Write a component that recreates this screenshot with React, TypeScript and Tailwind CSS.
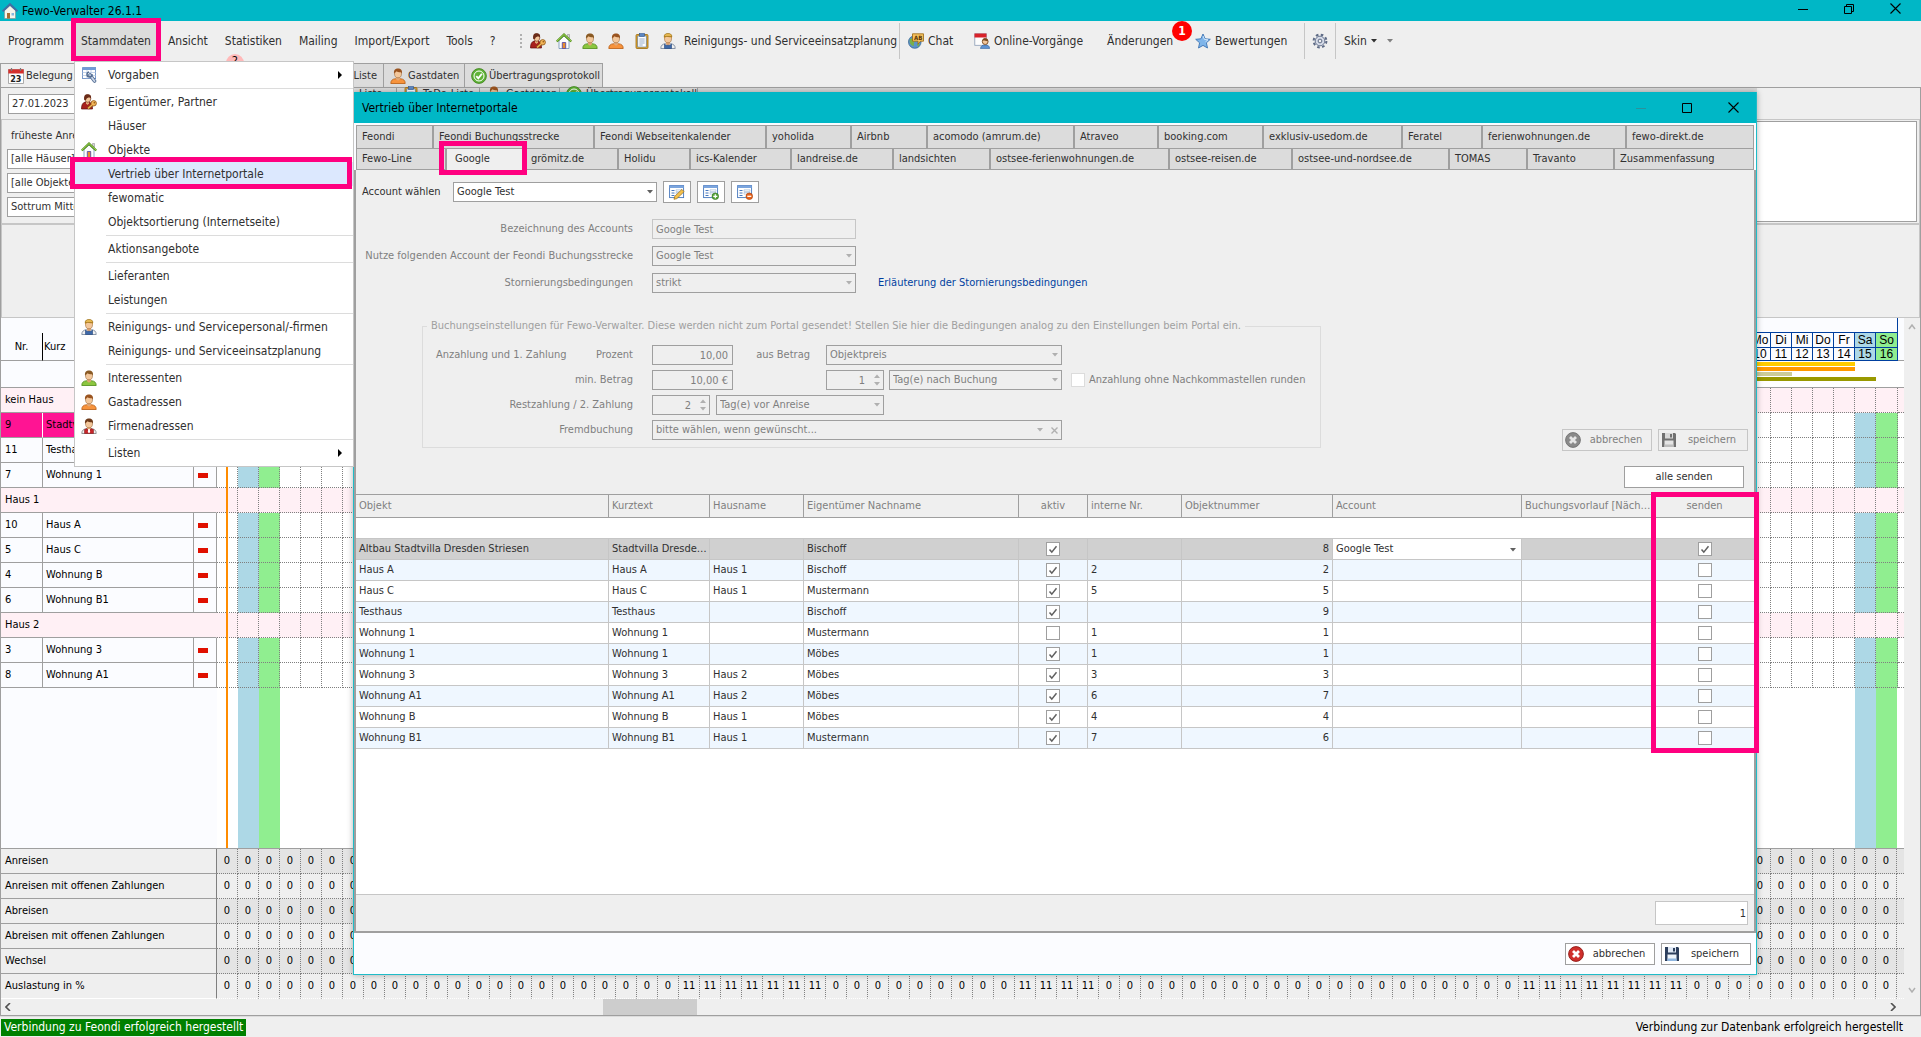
import { ReactNode, useState } from "react";
import clsx from "clsx";

interface IconProps {
  className?: string;
}

interface PersonProps {
  hair: string;
  shirt: string;
  edge: string;
  children?: ReactNode;
}

interface ObjectRow {
  name: string;
  short: string;
  house: string;
  owner: string;
  active: boolean;
  internal: string;
  number: number;
  account?: string;
  send?: boolean;
}

const DAY_NAMES = ["Fr", "Sa", "So", "Mo", "Di", "Mi", "Do"];

// 80 days starting on Friday, 27.01.2023
const days = Array.from({ length: 80 }, (_, i) => {
  const date = new Date(2023, 0, 27 + i);
  return { index: i, name: DAY_NAMES[i % 7], day: date.getDate() };
});

const calendarRows = [
  { nr: "", label: "kein Haus", house: true },
  { nr: "9", label: "Stadtvilla Dresden", selected: true },
  { nr: "11", label: "Testhaus" },
  { nr: "7", label: "Wohnung 1" },
  { nr: "", label: "Haus 1", house: true },
  { nr: "10", label: "Haus A" },
  { nr: "5", label: "Haus C" },
  { nr: "4", label: "Wohnung B" },
  { nr: "6", label: "Wohnung B1" },
  { nr: "", label: "Haus 2", house: true },
  { nr: "3", label: "Wohnung 3" },
  { nr: "8", label: "Wohnung A1" },
];

const summaryRows = [
  "Anreisen",
  "Anreisen mit offenen Zahlungen",
  "Abreisen",
  "Abreisen mit offenen Zahlungen",
  "Wechsel",
  "Auslastung in %",
];

const objectRows: ObjectRow[] = [
  { name: "Altbau Stadtvilla Dresden Striesen", short: "Stadtvilla Dresden Striesen", house: "", owner: "Bischoff", active: true, internal: "", number: 8, account: "Google Test", send: true },
  { name: "Haus A", short: "Haus A", house: "Haus 1", owner: "Bischoff", active: true, internal: "2", number: 2 },
  { name: "Haus C", short: "Haus C", house: "Haus 1", owner: "Mustermann", active: true, internal: "5", number: 5 },
  { name: "Testhaus", short: "Testhaus", house: "", owner: "Bischoff", active: true, internal: "", number: 9 },
  { name: "Wohnung 1", short: "Wohnung 1", house: "", owner: "Mustermann", active: false, internal: "1", number: 1 },
  { name: "Wohnung 1", short: "Wohnung 1", house: "", owner: "Möbes", active: true, internal: "1", number: 1 },
  { name: "Wohnung 3", short: "Wohnung 3", house: "Haus 2", owner: "Möbes", active: true, internal: "3", number: 3 },
  { name: "Wohnung A1", short: "Wohnung A1", house: "Haus 2", owner: "Möbes", active: true, internal: "6", number: 7 },
  { name: "Wohnung B", short: "Wohnung B", house: "Haus 1", owner: "Möbes", active: true, internal: "4", number: 4 },
  { name: "Wohnung B1", short: "Wohnung B1", house: "Haus 1", owner: "Mustermann", active: true, internal: "7", number: 6 },
];

const portalTabsTop = [
  ["Feondi", "w-[77px]"],
  ["Feondi Buchungsstrecke", "w-[161px]"],
  ["Feondi Webseitenkalender", "w-[172px]"],
  ["yoholida", "w-[85px]"],
  ["Airbnb", "w-[76px]"],
  ["acomodo (amrum.de)", "w-[147px]"],
  ["Atraveo", "w-[84px]"],
  ["booking.com", "w-[105px]"],
  ["exklusiv-usedom.de", "w-[139px]"],
  ["Feratel", "w-[80px]"],
  ["ferienwohnungen.de", "w-[144px]"],
  ["fewo-direkt.de", "w-[127px]"],
];

const portalTabsBottom = [
  ["Fewo-Line", "w-[90px]"],
  ["Google", "w-[79px]"],
  ["grömitz.de", "w-[93px]"],
  ["Holidu", "w-[72px]"],
  ["ics-Kalender", "w-[101px]"],
  ["landreise.de", "w-[102px]"],
  ["landsichten", "w-[97px]"],
  ["ostsee-ferienwohnungen.de", "w-[179px]"],
  ["ostsee-reisen.de", "w-[123px]"],
  ["ostsee-und-nordsee.de", "w-[157px]"],
  ["TOMAS", "w-[78px]"],
  ["Travanto", "w-[87px]"],
  ["Zusammenfassung", "w-[139px]"],
];

/* ---------- Icons ---------- */

function Person({ hair, shirt, edge, children }: PersonProps) {
  return (
    <svg viewBox="0 0 16 16" className="size-4 shrink-0">
      <path d="M.8 15.500c0-3 1.500-4.500 5-4.800h4.400c3.500.3 5 1.800 5 4.800z" fill={shirt} stroke={edge} strokeWidth=".8" />
      <path d="M6 8.500h4v2.700l-2 1.500-2-1.500z" fill="#e2a877" />
      <ellipse cx="8" cy="5.600" rx="3.500" ry="4.200" fill="#f3c79b" stroke="#9a6a3a" strokeWidth=".6" />
      <path d="M4.100 5.800C3.400 2.200 5.300.4 8 .4s4.600 1.700 3.900 5.400L11 4.200C9.500 4.400 7.500 4 6.600 3.200 6 4 5.200 4.400 5 4.500z" fill={hair} />
      {children}
    </svg>
  );
}

const GreenPerson = () => <Person hair="#8a5a24" shirt="#8cc63f" edge="#4d8a17" />;
const OrangePerson = () => <Person hair="#9a5420" shirt="#f7933c" edge="#b85c10" />;

const OwnerIcon = () => (
  <svg viewBox="0 0 16 16" className="size-4 shrink-0">
    <path d="M.5 15c0-4 1-6.500 4-7h3.500c2.500.5 3.500 3 3.500 7z" fill="#a8201e" stroke="#5f0d0d" strokeWidth=".7" />
    <path d="M5 7h3v2.500L6.500 11 5 9.500z" fill="#e2a877" />
    <ellipse cx="6.800" cy="4.600" rx="3" ry="3.700" fill="#f3c79b" stroke="#6b2c18" strokeWidth=".6" />
    <path d="M3.300 6C2.600 2 4 .3 6.500.3S10.600 1.500 10 4.500L8 3.300C7 4 5.500 4 5 6z" fill="#6b2c18" />
    <path d="M11.500 10.500 7 14.500" stroke="#8a5313" strokeWidth="2.800" />
    <circle cx="12.700" cy="9.300" r="2.700" fill="#f3b65a" stroke="#8a5313" strokeWidth=".8" />
    <path d="M11.500 10.500 7 14.500" stroke="#f3b65a" strokeWidth="1.400" />
    <circle cx="13.300" cy="8.700" r=".8" fill="#8a5313" />
  </svg>
);

const WorkerIcon = () => (
  <Person hair="#c98f35" shirt="#f0f0f0" edge="#6f7f95">
    <path d="M4.500 11v4.500h7V11l-1.500 1.300H6z" fill="#3d68a8" stroke="#24457a" strokeWidth=".6" />
    <path d="M4 3.500C4.500 1 6 .4 8 .4s3.500.6 4 3.100z" fill="#e5b64f" stroke="#8a6410" strokeWidth=".5" />
  </Person>
);

const CompanyIcon = () => (
  <Person hair="#6d3a1a" shirt="#f2f2f2" edge="#7b7b7b">
    <path d="M3.500 11.500 6 10.600l2 3 2-3 2.500.9v4h-9z" fill="#c6262a" stroke="#7d1012" strokeWidth=".5" />
    <path d="M7.300 11h1.400l.5 3L8 15.300 6.800 14z" fill="#fff" />
  </Person>
);

const HouseIcon = () => (
  <svg viewBox="0 0 16 16" className="size-4 shrink-0">
    <path d="M3 7.500 8 3l5 4.500v8H3z" fill="#fdfdfd" stroke="#6d8fb5" strokeWidth=".8" />
    <path d="M11.500 1.500h2v3.800l-2-1.800z" fill="#d8d8d8" stroke="#808080" strokeWidth=".5" />
    <path d="M.8 8.500 8 1.600l7.200 6.900" fill="none" stroke="#4d8a17" strokeWidth="2.200" />
    <path d="M.8 8.300 8 1.500l7.200 6.800" fill="none" stroke="#a6d95b" strokeWidth="1" />
    <path d="M6.300 15.500V9.500h3.400v6z" fill="#e88c2e" stroke="#5a4fa8" strokeWidth=".9" />
  </svg>
);

const AppIcon = () => (
  <svg viewBox="0 0 16 16" className="size-4 shrink-0">
    <path d="M2.500 7.500 8 2.500l5.500 5v8h-11z" fill="#f7f4ea" stroke="#8a8a8a" strokeWidth=".6" />
    <path d="M.6 8.400 8 1.200l7.400 7.200" fill="none" stroke="#3f6fa3" strokeWidth="2" />
    <path d="M5 15.500V10h3v5.500z" fill="#a86c32" />
    <path d="M9.500 10h2.500v2.500H9.500z" fill="#88b8dd" />
  </svg>
);

const ClipboardIcon = () => (
  <svg viewBox="0 0 16 16" className="size-4 shrink-0">
    <rect x="2" y="1.500" width="12" height="14" rx="1" fill="#e5a82e" stroke="#9a6a10" strokeWidth=".8" />
    <rect x="3.800" y="3" width="8.400" height="11" fill="#fff" stroke="#4a74b0" strokeWidth=".6" />
    <rect x="5.500" y=".6" width="5" height="2.800" fill="#5c87c2" stroke="#2f5690" strokeWidth=".6" />
    <path d="M5.300 6h5.400M5.300 8h5.400M5.300 10h5.400M5.300 12h3.400" stroke="#7a96bd" strokeWidth=".8" />
  </svg>
);

const ChatIcon = () => (
  <svg viewBox="0 0 16 16" className="size-4 shrink-0">
    <circle cx="6.800" cy="9" r="6.300" fill="#5b93c9" stroke="#2c5d8c" strokeWidth=".7" />
    <path d="M2 6c2-1 3 0 4 2s-1 3 0 5c-3 0-5-3-4-7zM9 11l3 0-2 3z" fill="#79b04a" />
    <path d="M4.500.8h11v7.400h-3l-2.500 3V8.200H4.500z" fill="#f6c35f" stroke="#99640f" strokeWidth=".8" />
    <text x="6" y="6.700" fontSize="6" fontWeight="bold" fill="#5c3605">AB</text>
  </svg>
);

const OnlineIcon = () => (
  <svg viewBox="0 0 16 16" className="size-4 shrink-0">
    <rect x=".8" y=".8" width="11.500" height="11.500" fill="#fdfdfd" stroke="#8a9cb5" strokeWidth=".8" />
    <path d="M.5.500h12v4H.5z" fill="#d8232a" />
    <path d="M6.500 15.600c.3-3 2-3.600 4.700-3.600s4.200.6 4.400 3.600z" fill="#5f92d1" stroke="#2e5c98" strokeWidth=".6" />
    <circle cx="11.200" cy="8.600" r="2.900" fill="#f3c79b" stroke="#7a4a20" strokeWidth=".9" />
    <path d="M8.300 8.200c.2-2.500 1.500-3 2.900-3s2.700.6 2.900 3c-1.500.2-4-1-4.300-1z" fill="#7a4a20" />
  </svg>
);

const StarIcon = () => (
  <svg viewBox="0 0 16 16" className="size-4 shrink-0">
    <path d="m8 1 2.100 4.800 5.200.5-3.900 3.500 1.100 5.200L8 12.400 3.500 15l1.100-5.200L.7 6.300l5.200-.5z" fill="#7fb5ea" stroke="#3d74b3" strokeWidth=".9" strokeLinejoin="round" />
    <path d="m8 3 1.400 3.400 3.600.4-2.500 2" fill="none" stroke="#cfe5fa" strokeWidth="1" />
  </svg>
);

const GearIcon = () => (
  <svg viewBox="0 0 16 16" className="size-4 shrink-0">
    <circle cx="8" cy="8" r="6.400" fill="none" stroke="#5d6a85" strokeWidth="2" strokeDasharray="2.600 2.430" />
    <circle cx="8" cy="8" r="4.800" fill="#d5dbe8" stroke="#6c7892" strokeWidth="1" />
    <circle cx="8" cy="8" r="1.900" fill="#f0f0f0" stroke="#5d6a85" strokeWidth="1" />
  </svg>
);

const CalendarIcon = () => (
  <svg viewBox="0 0 16 16" className="size-4 shrink-0">
    <rect x=".6" y="1.600" width="14.800" height="13.800" fill="#fff" stroke="#9a9a9a" strokeWidth=".8" />
    <path d="M.3 1.300h15.400v4.200H.3z" fill="#d4302c" />
    <path d="M3.500 0v3M12.500 0v3" stroke="#7c7c7c" strokeWidth="1.200" />
    <text x="2.200" y="14.200" fontSize="9" fontWeight="bold" fill="#222">23</text>
  </svg>
);

const ToolsIcon = () => (
  <svg viewBox="0 0 16 16" className="size-4 shrink-0">
    <rect x="1.600" y=".6" width="13" height="11" fill="#fff" stroke="#5b83bf" strokeWidth=".8" />
    <path d="M1.600.6h13V3h-13z" fill="#6f9ad6" />
    <path d="M1.600 5.500h13M1.600 8.500h13M6 3v8.500M10 3v8.500" stroke="#b5c9e6" strokeWidth=".8" />
    <path d="m9 8 4.500 6" stroke="#566f94" strokeWidth="3.600" strokeLinecap="round" />
    <path d="m9 8 4.500 6" stroke="#c8d5e8" strokeWidth="1.800" strokeLinecap="round" />
    <circle cx="8.500" cy="7.500" r="2.500" fill="none" stroke="#566f94" strokeWidth="1.500" strokeDasharray="11 4" />
  </svg>
);

const CheckIcon = () => (
  <svg viewBox="0 0 16 16" className="size-4 shrink-0">
    <circle cx="8" cy="8" r="7.400" fill="#5fb336" stroke="#3b7f1b" strokeWidth=".8" />
    <circle cx="8" cy="8" r="5" fill="none" stroke="#fff" strokeWidth="1" />
    <path d="m5.300 8.200 2 2.200 3.600-4.600" fill="none" stroke="#fff" strokeWidth="1.800" />
  </svg>
);

function FormIcon({ kind }: { kind: "edit" | "add" | "remove" }) {
  return (
    <svg viewBox="0 0 16 16" className="size-4">
      <rect x=".6" y="1.600" width="14" height="12" fill="#fff" stroke="#4677bd" strokeWidth=".9" />
      <path d="M.6 1.600h14V4H.6z" fill="#7ba5de" />
      <path d="M2.500 6.500h3M2.500 9h3M2.500 11.500h3" stroke="#4677bd" strokeWidth="1" />
      <path d="M7 5.800h6v1.600H7zM7 8.500h6v1.600H7z" fill="#fff" stroke="#9bb3d4" strokeWidth=".6" />
      {kind === "edit" && <path d="m5 15.300.7-2.900 7.200-7 2.200 2.200-7.200 7z" fill="#f5c14b" stroke="#9a6a10" strokeWidth=".7" />}
      {kind === "add" && (
        <>
          <circle cx="12.300" cy="12.300" r="3.300" fill="#57a639" stroke="#2f6f1b" strokeWidth=".6" />
          <path d="M10.300 12.300h4M12.300 10.300v4" stroke="#fff" strokeWidth="1.200" />
        </>
      )}
      {kind === "remove" && (
        <>
          <circle cx="12.300" cy="12.300" r="3.300" fill="#e8631c" stroke="#a33c08" strokeWidth=".6" />
          <path d="M10.300 12.300h4" stroke="#fff" strokeWidth="1.300" />
        </>
      )}
    </svg>
  );
}

function CancelIcon({ disabled }: { disabled?: boolean }) {
  return (
    <svg viewBox="0 0 16 16" className="size-4">
      <circle cx="8" cy="8" r="7.400" fill={disabled ? "#8a8a8a" : "#cf2f2b"} stroke={disabled ? "#707070" : "#8e1714"} strokeWidth=".9" />
      <path d="m5 5 6 6M11 5l-6 6" stroke={disabled ? "#e6e6e6" : "#fff"} strokeWidth="2.800" />
    </svg>
  );
}

function SaveIcon({ disabled }: { disabled?: boolean }) {
  return (
    <svg viewBox="0 0 16 16" className="size-4">
      <path d="M1 1h13l1 1v13H1z" fill={disabled ? "#707070" : "#2c3e5c"} />
      <path d="M4 1h8v5.500H4z" fill={disabled ? "#d8d8d8" : "#dfe8f5"} />
      <path d="M9 2h2v3.500H9z" fill={disabled ? "#707070" : "#2c3e5c"} />
      <path d="M3.500 8.500h9V15h-9z" fill={disabled ? "#e4e4e4" : "#eef4fb"} />
      <path d="M3.500 12.500h9V15h-9z" fill={disabled ? "#bdbdbd" : "#8fb6e0"} />
    </svg>
  );
}

function ArrowDown({ className }: IconProps) {
  return (
    <svg viewBox="0 0 6 4" className={clsx("h-1 w-1.5 shrink-0", className)}>
      <path d="M0 0h6L3 3.500z" fill="currentColor" />
    </svg>
  );
}

function WindowButtons({ size, dim, restore }: { size: string; dim?: boolean; restore?: boolean }) {
  return (
    <div className={clsx("flex text-black", size)}>
      <button aria-label="Minimieren" className={clsx("flex w-[46px] items-center justify-center", dim && "text-[#2a929c]")}>
        <svg viewBox="0 0 10 10" className="size-2.5"><path d="M0 5.500h10" stroke="currentColor" /></svg>
      </button>
      <button aria-label="Maximieren" className="flex w-[46px] items-center justify-center">
        <svg viewBox="0 0 10 10" className="size-2.5" fill="none" stroke="currentColor">
          {restore ? <path d="M.5 2.500h7v7h-7zM2.500 2.500v-2h7v7h-2" /> : <path d="M.5.500h9v9h-9z" />}
        </svg>
      </button>
      <button aria-label="Schließen" className="flex w-[46px] items-center justify-center">
        <svg viewBox="0 0 11 11" className="size-[11px]"><path d="m.5.500 10 10M10.500.500l-10 10" stroke="currentColor" strokeWidth="1.100" /></svg>
      </button>
    </div>
  );
}

/* ---------- Form controls ---------- */

interface ComboProps {
  id?: string;
  label?: string;
  value: string;
  width: string;
  disabled?: boolean;
  clearable?: boolean;
}

function Combo({ id, label, value, width, disabled, clearable }: ComboProps) {
  return (
    <div className={clsx("relative h-5 shrink-0", width)}>
      <select
        id={id}
        aria-label={label}
        disabled={disabled}
        className={clsx(
          "h-full w-full appearance-none rounded-none border border-[#9f9f9f] pl-[3px] opacity-100 outline-none",
          disabled ? "bg-[#efefef] text-[#7f7f7f]" : "bg-white text-[#303030]"
        )}
      >
        <option>{value}</option>
      </select>
      <div className={clsx("pointer-events-none absolute inset-y-0 right-1 flex items-center gap-2", disabled ? "text-[#b0b0b0]" : "text-[#606060]")}>
        <ArrowDown />
        {clearable && <svg viewBox="0 0 7 7" className="size-[7px]"><path d="m.5.500 6 6M6.500.500l-6 6" stroke="currentColor" strokeWidth="1.400" /></svg>}
      </div>
    </div>
  );
}

function Spin({ id, label, value }: { id?: string; label?: string; value: string }) {
  return (
    <div className="relative h-5 w-[58px] shrink-0">
      <input id={id} aria-label={label} disabled defaultValue={value} className="h-full w-full border border-[#9f9f9f] bg-[#efefef] pr-[18px] text-right text-[#7f7f7f]" />
      <div className="pointer-events-none absolute inset-y-1 right-1 flex flex-col justify-between text-[#b0b0b0]">
        <ArrowDown className="rotate-180" />
        <ArrowDown />
      </div>
    </div>
  );
}

function Check({ label, checked, light }: { label: string; checked?: boolean; light?: boolean }) {
  const [on, setOn] = useState(Boolean(checked));
  return (
    <span className="relative inline-block size-3.5 align-middle">
      <input
        type="checkbox"
        aria-label={label}
        checked={on}
        onChange={() => setOn(!on)}
        className={clsx("absolute inset-0 size-3.5 appearance-none border bg-white", light ? "border-[#dcdcdc]" : "border-[#9f9f9f]")}
      />
      {on && (
        <svg viewBox="0 0 14 14" className="pointer-events-none absolute inset-0 size-3.5">
          <path d="m3.500 7.500 2.300 2.600 4.700-5.800" fill="none" stroke="#606060" strokeWidth="1.500" />
        </svg>
      )}
    </span>
  );
}

function ActionButton({ icon, children, disabled }: { icon: ReactNode; children: ReactNode; disabled?: boolean }) {
  return (
    <button
      disabled={disabled}
      className={clsx(
        "flex h-[22px] w-[90px] items-center border pl-0.5",
        disabled ? "border-[#c6c6c6] bg-[#efefef] text-[#7f7f7f]" : "border-[#9f9f9f] bg-white text-[#303030]"
      )}
    >
      {icon}
      <span className="flex-1 text-center">{children}</span>
    </button>
  );
}

/* ---------- Main window ---------- */

function MenuBar() {
  const separator = "h-9 w-px shrink-0 bg-[#c6c6c6]";
  return (
    <div className="flex h-10 items-center text-xs text-[#303030]">
      <nav className="flex w-[520px] shrink-0 items-center gap-px">
        {["Programm", "Stammdaten", "Ansicht", "Statistiken", "Mailing", "Import/Export", "Tools", "?"].map((item) => (
          <button key={item} className={clsx("h-9 px-2", item === "Stammdaten" && "bg-[#dcdcdc]")}>
            {item}
          </button>
        ))}
      </nav>
      <div className="flex w-2.5 flex-col gap-0.5">
        {[0, 1, 2, 3].map((i) => <span key={i} className="size-0.5 bg-[#b0b0b0]" />)}
      </div>
      <div className="flex items-center gap-2.5">
        <OwnerIcon />
        <HouseIcon />
        <GreenPerson />
        <OrangePerson />
        <ClipboardIcon />
        <WorkerIcon />
      </div>
      <button className="ml-2 w-[215px] shrink-0 text-left whitespace-nowrap">Reinigungs- und Serviceeinsatzplanung</button>
      <div className={separator} />
      <button className="ml-2 flex w-16 items-center gap-1"><ChatIcon />Chat</button>
      <button className="ml-0.5 flex w-[133px] items-center gap-1 whitespace-nowrap"><OnlineIcon />Online-Vorgänge</button>
      <button className="relative w-[88px] text-left">
        Änderungen
        <span className="absolute -top-3 left-[65px] flex size-5 items-center justify-center rounded-full bg-[#ff0000] font-bold text-white">1</span>
      </button>
      <button className="flex w-[109px] items-center gap-1"><StarIcon />Bewertungen</button>
      <div className={separator} />
      <button aria-label="Einstellungen" className="flex w-[30px] justify-center"><GearIcon /></button>
      <div className={separator} />
      <button className="ml-2 flex items-center gap-1">Skin<ArrowDown /></button>
      <ArrowDown className="ml-2.5 text-[#808080]" />
    </div>
  );
}

function MainTabs() {
  const tab = "flex items-center gap-0.5 border-r border-[#9f9f9f] bg-[#dcdcdc] px-1.5 whitespace-nowrap";
  return (
    <div className="mt-0.5 flex h-[25px] border-b border-[#9f9f9f] text-[#303030]">
      <div className="flex border-t border-l border-[#9f9f9f]">
        <button className="flex w-[116px] items-center gap-0.5 bg-[#efefef] px-[7px]"><CalendarIcon />Belegung</button>
        <button className={clsx(tab, "w-[84px]")}><HouseIcon />Objekte</button>
        <button className={clsx(tab, "w-[84px]")}><ClipboardIcon />Liste</button>
        <button className={clsx(tab, "w-[99px] justify-end")}>ToDo-Liste</button>
        <button className={clsx(tab, "w-[81px]")}><OrangePerson />Gastdaten</button>
        <button className={clsx(tab, "w-[138px]")}><CheckIcon />Übertragungsprotokoll</button>
      </div>
    </div>
  );
}

function FilterPanel() {
  const tab = "flex items-center gap-1 border-r border-[#9f9f9f] bg-[#dcdcdc] pl-1.5";
  const select = "h-5 w-[300px] border border-[#9f9f9f] bg-white pl-[3px] appearance-none rounded-none";
  return (
    <section className="border-r border-l border-[#9f9f9f] text-[#303030]">
      <div className="flex h-[31px] items-center">
        <input aria-label="Datum" defaultValue="27.01.2023" className="mx-[7px] h-5 w-[338px] border border-[#9f9f9f] bg-white pl-[3px]" />
        <div className="flex h-3 flex-1 self-start bg-[#d8d8d8]">
          <button className={clsx(tab, "w-11")}>Liste</button>
          <button className={clsx(tab, "w-[83px]")}><ClipboardIcon />ToDo-Liste</button>
          <button className={clsx(tab, "w-20")}><OrangePerson />Gastdaten</button>
          <button className={clsx(tab, "w-[138px]")}><CheckIcon />Übertragungsprotokoll</button>
        </div>
        <div className="w-[163px]" />
      </div>
      <div className="flex border border-b-2 border-[#c6c6c6]">
        <div className="flex w-[352px] flex-col gap-1 py-1.5 pl-[5px]">
          <span className="h-[19px] pl-1 leading-[19px]">früheste Anreise</span>
          <select aria-label="Haus" className={select}><option>[alle Häuser]</option></select>
          <select aria-label="Objekt" className={select}><option>[alle Objekte]</option></select>
          <select aria-label="Ort" className={select}><option>Sottrum Mitte</option></select>
        </div>
        <textarea aria-label="Notizen" className="my-px mr-0.5 flex-1 resize-none border border-[#9f9f9f] bg-white" />
      </div>
      <div className="h-[93px] border border-t-0 border-[#c6c6c6]" />
    </section>
  );
}

function dayColor(index: number) {
  if (index % 7 === 1) return "bg-[#add8e6]";
  if (index % 7 === 2) return "bg-[#90ee90]";
  return "";
}

function CalendarColumns() {
  return (
    <colgroup>
      <col className="w-[42px]" />
      <col className="w-[151px]" />
      <col className="w-[23px]" />
      {days.map((d) => <col key={d.index} className="w-[21px]" />)}
      <col />
    </colgroup>
  );
}

function Occupancy() {
  const solid = "border-b border-[#9f9f9f]";
  const dotted = "border-r border-b border-dotted border-[#7f7f7f] p-0";
  const dayHead = "border-r border-b border-[#003f9f] p-0 text-center font-['Liberation_Sans',sans-serif] text-xs leading-3 font-normal";
  return (
    <table className="w-full table-fixed border-separate border-spacing-0 bg-white text-left text-black">
      <CalendarColumns />
      <thead className="bg-[#fbfcff]">
        <tr className="h-[15px]">
          <th colSpan={3} />
          <th colSpan={80} className="border-r border-b border-[#003f9f]" />
          <th />
        </tr>
        <tr className="h-[15px]">
          <th rowSpan={2} className="border-r border-b border-r-black border-b-[#9f9f9f] p-0 text-center align-middle font-normal">Nr.</th>
          <th rowSpan={2} colSpan={2} className="border-b border-[#9f9f9f] py-0 pr-0 pl-px align-middle font-normal">Kurz</th>
          {days.map((d) => <th key={d.index} className={clsx(dayHead, dayColor(d.index))}>{d.name}</th>)}
          <th rowSpan={2} className={solid} />
        </tr>
        <tr className="h-[13px]">
          {days.map((d) => <th key={d.index} className={clsx(dayHead, dayColor(d.index))}>{d.day}</th>)}
        </tr>
        <tr className="h-[27px]">
          <th colSpan={3} className={solid} />
          <th colSpan={81} className={clsx(solid, "bg-white p-0 align-top")}>
            <div className="flex flex-col gap-px pt-px">
              <div className="h-1 w-[1638px] bg-[#ffcc00]" />
              <div className="h-1 w-[1638px] bg-[#ff9900]" />
              <div className="h-1 w-[1575px] bg-[#cccc99]" />
              <div className="h-1 w-[1659px] bg-[#999900]" />
            </div>
          </th>
        </tr>
      </thead>
      <tbody>
        {calendarRows.map((row) => (
          <tr key={row.label} className={clsx("h-[25px]", row.house && "bg-[#fff0f5]")}>
            {row.house ? (
              <td colSpan={3} className={clsx(solid, "border-r border-r-[#fff0f5] py-0 pl-1")}>{row.label}</td>
            ) : (
              <>
                <td className={clsx(solid, "border-r py-0 pl-1", row.selected ? "border-r-white bg-[#ff1493]" : "bg-[#fbfcff]")}>{row.nr}</td>
                <td className={clsx(solid, "overflow-hidden border-r py-0 pl-[3px] whitespace-nowrap", row.selected ? "bg-[#ff1493]" : "bg-[#fbfcff]")}>{row.label}</td>
                <td className={clsx(solid, "border-r border-r-[#9f9f9f] bg-[#fbfcff] p-0")}>
                  <div className="ml-1 h-[5px] w-2.5 bg-[#e01000]" />
                </td>
              </>
            )}
            {days.map((d) => <td key={d.index} className={clsx(dotted, !row.house && dayColor(d.index))} />)}
            <td className="border-b border-dotted border-[#7f7f7f] p-0" />
          </tr>
        ))}
      </tbody>
    </table>
  );
}

function occupancyRate(index: number) {
  const busy = (index >= 22 && index <= 28) || (index >= 38 && index <= 41) || (index >= 62 && index <= 69);
  return busy ? 11 : 0;
}

function Summary() {
  return (
    <table className="w-full table-fixed border-separate border-spacing-0 border-t border-[#9f9f9f] text-left text-black">
      <CalendarColumns />
      <tbody>
        {summaryRows.map((label, r) => (
          <tr key={label} className={clsx("h-[25px]", r % 2 === 0 ? "bg-[#e4e4e4]" : "bg-[#efefef]")}>
            <th colSpan={3} className={clsx("border-r border-b border-r-[#7f7f7f] bg-[#efefef] py-0 pl-1 font-normal", r === 5 ? "border-b-white" : "border-b-[#9f9f9f]")}>{label}</th>
            {days.map((d) => (
              <td key={d.index} className={clsx("border-r border-b border-dotted border-[#7f7f7f] p-0 text-center", r === 5 && "border-b-white")}>
                {r === 5 ? occupancyRate(d.index) : 0}
              </td>
            ))}
            <td className={clsx("border-b border-dotted border-[#7f7f7f] p-0", r === 5 && "border-b-white")} />
          </tr>
        ))}
      </tbody>
    </table>
  );
}

function Calendar() {
  return (
    <section className="flex flex-1 flex-col border-b border-[#9f9f9f]">
      <div className="flex flex-1 border-r border-l border-[#9f9f9f]">
        <div className="relative flex min-w-0 flex-1 flex-col overflow-hidden">
          <Occupancy />
          <div className="flex flex-1 bg-white">
            <div className="w-[216px] shrink-0 bg-[#fbfcff]" />
            {days.map((d) => <div key={d.index} className={clsx("w-[21px] shrink-0", dayColor(d.index))} />)}
          </div>
          <div className="absolute top-11 bottom-[151px] left-[225px] w-0.5 bg-[#ff8c00]" />
          <Summary />
        </div>
        <div className="flex w-4 flex-col items-center justify-between bg-[#efefef] py-1.5 text-[#b0b0b0]">
          <svg viewBox="0 0 8 6" className="h-1.5 w-2"><path d="m1 5 3-4 3 4" fill="none" stroke="currentColor" strokeWidth="1.500" /></svg>
          <svg viewBox="0 0 8 6" className="h-1.5 w-2"><path d="m1 1 3 4 3-4" fill="none" stroke="currentColor" strokeWidth="1.500" /></svg>
        </div>
      </div>
      <div className="flex h-4 items-center justify-between border-r border-l border-[#9f9f9f] pr-6 pl-1 text-[#505050]">
        <svg viewBox="0 0 6 8" className="h-2 w-1.5"><path d="M5 0 1 4l4 4" fill="none" stroke="currentColor" strokeWidth="1.600" /></svg>
        <div className="flex-1 self-stretch">
          <div className="ml-[31.5%] h-full w-[94px] bg-[#cdcdcd]" />
        </div>
        <svg viewBox="0 0 6 8" className="h-2 w-1.5"><path d="m1 0 4 4-4 4" fill="none" stroke="currentColor" strokeWidth="1.600" /></svg>
      </div>
    </section>
  );
}

interface MenuEntry {
  label?: string;
  icon?: ReactNode;
  sub?: boolean;
}

const masterDataMenu: MenuEntry[] = [
  { label: "Vorgaben", icon: <ToolsIcon />, sub: true },
  {},
  { label: "Eigentümer, Partner", icon: <OwnerIcon /> },
  { label: "Häuser" },
  { label: "Objekte", icon: <HouseIcon /> },
  { label: "Vertrieb über Internetportale" },
  { label: "fewomatic" },
  { label: "Objektsortierung (Internetseite)" },
  {},
  { label: "Aktionsangebote" },
  {},
  { label: "Lieferanten" },
  { label: "Leistungen" },
  {},
  { label: "Reinigungs- und Servicepersonal/-firmen", icon: <WorkerIcon /> },
  { label: "Reinigungs- und Serviceeinsatzplanung" },
  {},
  { label: "Interessenten", icon: <GreenPerson /> },
  { label: "Gastadressen", icon: <OrangePerson /> },
  { label: "Firmenadressen", icon: <CompanyIcon /> },
  {},
  { label: "Listen", sub: true },
];

function MasterDataMenu() {
  return (
    <div role="menu" className="absolute top-[61px] left-[74px] w-[280px] border border-[#c6c6c6] bg-white py-px text-xs text-[#303030]">
      {masterDataMenu.map((entry, i) =>
        entry.label ? (
          <button
            key={i}
            role="menuitem"
            className={clsx("flex h-6 w-full items-center gap-[11px] pr-[11px] pl-1.5 text-left", entry.label.startsWith("Vertrieb") && "bg-[#dce8fe]")}
          >
            <span className="size-4 shrink-0">{entry.icon}</span>
            <span className="flex-1 whitespace-nowrap">{entry.label}</span>
            {entry.sub && <svg viewBox="0 0 4 8" className="h-2 w-1"><path d="m0 0 4 4-4 4z" fill="black" /></svg>}
          </button>
        ) : (
          <div key={i} className="ml-[31px] h-[3px] py-px">
            <div className="h-px bg-[#dcdcdc]" />
          </div>
        )
      )}
    </div>
  );
}

/* ---------- Portal dialog ---------- */

function PortalTabs({ tabs, height }: { tabs: string[][]; height: string }) {
  return (
    <div className={clsx("flex border-b border-[#9f9f9f]", height)}>
      {tabs.map(([name, width]) => (
        <button
          key={name}
          className={clsx(
            "flex-auto border-r-2 border-[#9f9f9f] text-left whitespace-nowrap last:border-r",
            width,
            name === "Google" ? "-mb-px bg-[#efefef] pb-0.5 pl-2" : "bg-[#dcdcdc] pl-[5px]"
          )}
        >
          {name}
        </button>
      ))}
    </div>
  );
}

function AccountForm() {
  const label = "w-[277px] shrink-0 text-right";
  const iconButton = "flex h-[22px] w-7 items-center justify-center border border-[#9f9f9f] bg-white";
  return (
    <div className="text-[#7f7f7f]">
      <div className="flex items-center pt-[11px] pl-1.5 text-[#303030]">
        <label htmlFor="account" className="w-[91px]">Account wählen</label>
        <Combo id="account" value="Google Test" width="w-[204px]" />
        <div className="ml-1.5 flex gap-1.5">
          <button aria-label="Account bearbeiten" className={iconButton}><FormIcon kind="edit" /></button>
          <button aria-label="Account hinzufügen" className={iconButton}><FormIcon kind="add" /></button>
          <button aria-label="Account entfernen" className={iconButton}><FormIcon kind="remove" /></button>
        </div>
      </div>
      <div className="mt-4 flex flex-col gap-[7px]">
        <div className="flex items-center gap-[19px]">
          <label htmlFor="title" className={label}>Bezeichnung des Accounts</label>
          <input id="title" disabled defaultValue="Google Test" className="h-5 w-[204px] border border-[#c6c6c6] bg-[#efefef] pl-[3px]" />
        </div>
        <div className="flex items-center gap-[19px]">
          <label htmlFor="feondi" className={label}>Nutze folgenden Account der Feondi Buchungsstrecke</label>
          <Combo id="feondi" value="Google Test" width="w-[204px]" disabled />
        </div>
        <div className="flex items-center gap-[19px]">
          <label htmlFor="storno" className={label}>Stornierungsbedingungen</label>
          <Combo id="storno" value="strikt" width="w-[204px]" disabled />
          <a href="#storno" className="ml-[3px] text-[#003f9f]">Erläuterung der Stornierungsbedingungen</a>
        </div>
      </div>
    </div>
  );
}

function BookingSettings() {
  const field = "h-5 w-[81px] shrink-0 border border-[#9f9f9f] bg-[#efefef] pr-1 text-right";
  const label = "w-[210px] shrink-0 pr-[19px] text-right";
  return (
    <fieldset className="ml-[66px] w-[899px] shrink-0 border border-[#dcdcdc] pb-[7px] pl-[19px] text-[#7f7f7f]">
      <legend className="-ml-[15px] h-[14px] px-1 leading-[14px] whitespace-nowrap text-[#a0a0a0]">
        Buchungseinstellungen für Fewo-Verwalter. Diese werden nicht zum Portal gesendet! Stellen Sie hier die Bedingungen analog zu den Einstellungen beim Portal ein.
      </legend>
      <div className="mt-3 flex flex-col gap-[5px]">
        <div className="flex items-center">
          <span className="-ml-1.5 w-34">Anzahlung und 1. Zahlung</span>
          <label htmlFor="percent" className="w-20 pr-[19px] text-right">Prozent</label>
          <input id="percent" disabled defaultValue="10,00" className={field} />
          <label htmlFor="basis" className="w-[93px] pr-4 text-right">aus Betrag</label>
          <Combo id="basis" value="Objektpreis" width="w-[236px]" disabled />
        </div>
        <div className="flex items-center">
          <label htmlFor="minimum" className={label}>min. Betrag</label>
          <input id="minimum" disabled defaultValue="10,00 €" className={field} />
          <div className="w-[93px]" />
          <Spin label="Tage Anzahlung" value="1" />
          <div className="w-[5px]" />
          <Combo label="Bezug Anzahlung" value="Tag(e) nach Buchung" width="w-[173px]" disabled />
          <label className="ml-[9px] flex items-center gap-1 whitespace-nowrap">
            <Check label="Anzahlung ohne Nachkommastellen runden" light />
            Anzahlung ohne Nachkommastellen runden
          </label>
        </div>
        <div className="flex items-center">
          <label htmlFor="rest" className={label}>Restzahlung / 2. Zahlung</label>
          <Spin id="rest" value="2" />
          <div className="w-1.5" />
          <Combo label="Bezug Restzahlung" value="Tag(e) vor Anreise" width="w-[168px]" disabled />
        </div>
        <div className="flex items-center">
          <label htmlFor="foreign" className={label}>Fremdbuchung</label>
          <Combo id="foreign" value="bitte wählen, wenn gewünscht..." width="w-[410px]" disabled clearable />
        </div>
      </div>
    </fieldset>
  );
}

function ObjectTable() {
  const headBase = "truncate border-t border-r border-b border-[#9f9f9f] font-normal last:border-r-0";
  const head = clsx(headBase, "py-0 pl-[3px] text-left");
  const headCenter = clsx(headBase, "p-0 text-center");
  const cellBase = "truncate border-r border-b border-[#c6c6c6] last:border-r-0";
  const cell = clsx(cellBase, "py-0 pl-[3px]");
  const cellCenter = clsx(cellBase, "p-0 text-center leading-none");
  return (
    <table className="w-full table-fixed border-separate border-spacing-0 text-[#303030]">
      <colgroup>
        <col className="w-[253px]" />
        <col className="w-[101px]" />
        <col className="w-[94px]" />
        <col className="w-[215px]" />
        <col className="w-[69px]" />
        <col className="w-[94px]" />
        <col className="w-[151px]" />
        <col className="w-[189px]" />
        <col className="w-[133px]" />
        <col className="w-[99px]" />
      </colgroup>
      <thead>
        <tr className="h-6 bg-[#efefef] text-[#7f7f7f]">
          <th className={head}>Objekt</th>
          <th className={head}>Kurztext</th>
          <th className={head}>Hausname</th>
          <th className={head}>Eigentümer Nachname</th>
          <th className={headCenter}>aktiv</th>
          <th className={head}>interne Nr.</th>
          <th className={head}>Objektnummer</th>
          <th className={head}>Account</th>
          <th className={clsx(head, "pr-0")}>Buchungsvorlauf [Nächte]</th>
          <th className={headCenter}>senden</th>
        </tr>
        <tr className="h-[21px]">
          <th colSpan={10} className="border-b border-[#c6c6c6] p-0" />
        </tr>
      </thead>
      <tbody>
        {objectRows.map((row, i) => (
          <tr key={i} className={clsx("h-[21px]", i === 0 ? "bg-[#d0d0d0]" : i % 2 ? "bg-[#eff7ff]" : "bg-white")}>
            <td className={cell}>{row.name}</td>
            <td className={clsx(cell, "pr-0")}>{row.short}</td>
            <td className={cell}>{row.house}</td>
            <td className={cell}>{row.owner}</td>
            <td className={cellCenter}><Check label={`${row.name} aktiv`} checked={row.active} /></td>
            <td className={cell}>{row.internal}</td>
            <td className={clsx(cell, "pr-[3px] text-right")}>{row.number}</td>
            <td className={clsx(cell, row.account && "bg-white")}>
              {row.account && (
                <div className="relative">
                  <select aria-label="Account" className="w-full appearance-none bg-white">
                    <option>{row.account}</option>
                  </select>
                  <ArrowDown className="pointer-events-none absolute top-1.5 right-[5px] text-[#606060]" />
                </div>
              )}
            </td>
            <td className={cell} />
            <td className={cellCenter}><Check label={`${row.name} senden`} checked={row.send} /></td>
          </tr>
        ))}
      </tbody>
    </table>
  );
}

function PortalDialog() {
  return (
    <div role="dialog" aria-label="Vertrieb über Internetportale" className="absolute top-[92px] right-[164px] bottom-[62px] left-[353px] flex flex-col border border-t-0 border-[#1fbcc8] bg-[#fbfcff] text-[#303030] shadow-[0_0_6px_rgba(0,0,0,0.3)]">
      <div className="flex h-[31px] shrink-0 items-center justify-between bg-[#00b7c6] pl-2 text-xs text-black">
        <span>Vertrieb über Internetportale</span>
        <WindowButtons size="h-full" dim />
      </div>
      <div className="mt-0.5 mr-0.5 ml-0.5 border-t border-l border-[#9f9f9f]">
        <PortalTabs tabs={portalTabsTop} height="h-[23px]" />
        <PortalTabs tabs={portalTabsBottom} height="h-[21px]" />
      </div>
      <div className="flex flex-1 flex-col border-r-2 border-b-2 border-l-2 border-[#9f9f9f] bg-[#efefef]">
        <AccountForm />
        <div className="mt-[26px] flex items-end justify-between pr-1.5">
          <BookingSettings />
          <div className="-mb-[3px] flex gap-1.5">
            <ActionButton disabled icon={<CancelIcon disabled />}>abbrechen</ActionButton>
            <ActionButton disabled icon={<SaveIcon disabled />}>speichern</ActionButton>
          </div>
        </div>
        <button className="mt-[18px] mr-2.5 mb-1.5 h-[22px] w-[120px] self-end border border-[#9f9f9f] bg-white">alle senden</button>
        <div className="flex-1 bg-white">
          <ObjectTable />
        </div>
        <div className="flex h-[37px] items-center justify-end border-t border-[#c6c6c6] pr-1.5">
          <input aria-label="Anzahl" readOnly value="1" className="h-6 w-[93px] border border-[#c6c6c6] bg-white pr-px text-right" />
        </div>
      </div>
      <div className="flex h-[41px] shrink-0 items-center justify-end gap-1.5 pt-0.5 pr-[5px] pb-0.5">
        <ActionButton icon={<CancelIcon />}>abbrechen</ActionButton>
        <ActionButton icon={<SaveIcon />}>speichern</ActionButton>
      </div>
    </div>
  );
}

export default function App() {
  const mark = "pointer-events-none absolute border-[5px] border-[#ff0080]";
  return (
    <div className="relative flex min-h-screen flex-col overflow-hidden bg-[#efefef] font-['DejaVu_Sans_Condensed','Liberation_Sans',sans-serif] text-[11px] leading-[14px]">
      <header className="flex h-[21px] items-center justify-between bg-[#00b7c6] text-xs text-black">
        <div className="flex items-center gap-1 pl-0.5">
          <AppIcon />
          <span>Fewo-Verwalter 26.1.1</span>
        </div>
        <WindowButtons size="h-[17px] self-start pr-[3px]" restore />
      </header>
      <MenuBar />
      <MainTabs />
      <FilterPanel />
      <Calendar />
      <footer className="flex h-[21px] items-center justify-between border-t border-[#dcdcdc] pr-[18px] pl-px text-xs">
        <span className="bg-[#008000] px-[3px] leading-[17px] text-white">Verbindung zu Feondi erfolgreich hergestellt</span>
        <span className="text-black">Verbindung zur Datenbank erfolgreich hergestellt</span>
      </footer>

      <span className="absolute top-[54px] left-[226px] size-[18px] rounded-full bg-[#ffb9b9] text-center">2</span>
      <PortalDialog />
      <MasterDataMenu />

      <div className={clsx(mark, "top-[18px] left-[71px] h-[43px] w-[90px]")} />
      <div className={clsx(mark, "top-[157px] left-[70px] h-8 w-[282px]")} />
      <div className={clsx(mark, "top-[141px] left-[439px] h-[34px] w-[88px]")} />
      <div className={clsx(mark, "top-[492px] right-[162px] h-[261px] w-[108px]")} />
    </div>
  );
}
